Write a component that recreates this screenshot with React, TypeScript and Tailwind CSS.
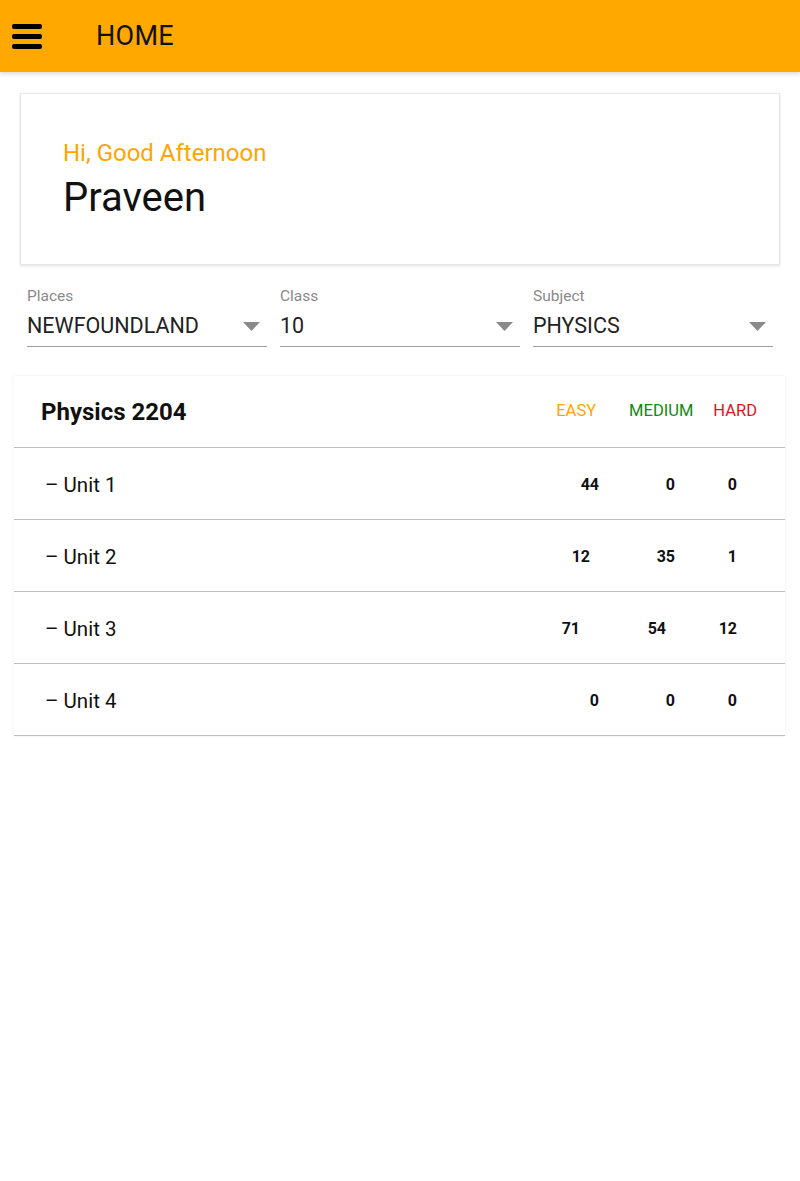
import React from "react";

const rows = [
  { name: "Unit 1", v: ["44", "0", "0"], w: ["w-[585px]", "w-[76px]", "w-[62px]"] },
  { name: "Unit 2", v: ["12", "35", "1"], w: ["w-[576px]", "w-[85px]", "w-[62px]"] },
  { name: "Unit 3", v: ["71", "54", "12"], w: ["w-[566px]", "w-[86px]", "w-[71px]"] },
  { name: "Unit 4", v: ["0", "0", "0"], w: ["w-[585px]", "w-[76px]", "w-[62px]"] },
];

function Select({ label, value }: { label: string; value: string }) {
  return (
    <div className="flex w-[240px] flex-col border-b border-[#9e9e9e]">
      <div className="text-[15.5px] leading-[20px] text-[#8a8a8a]">{label}</div>
      <div className="flex h-[40px] items-center justify-between pr-[7px]">
        <span className="text-[21.5px] text-[#222]">{value}</span>
        <svg width="17" height="9" viewBox="0 0 17 9">
          <path d="M0 0 L17 0 L8.5 9 Z" fill="#8a8a8a" />
        </svg>
      </div>
    </div>
  );
}

export default function App() {
  return (
    <div className="min-h-[1181px] w-[800px] bg-white font-['Roboto',sans-serif]">
      <header className="flex h-[72px] items-center bg-[#ffa800] shadow-[0_2px_4px_rgba(0,0,0,0.15)]">
        <div className="ml-[12px] flex w-[30px] flex-col gap-[5px]">
          <div className="h-[5px] rounded-[2px] bg-black" />
          <div className="h-[5px] rounded-[2px] bg-black" />
          <div className="h-[5px] rounded-[2px] bg-black" />
        </div>
        <div className="ml-[54px] text-[27px] tracking-[0.3px] text-[#111]">HOME</div>
      </header>

      <div className="mx-[20px] mt-[21px] flex h-[172px] flex-col justify-center border border-[#e6e6e6] pl-[42px] shadow-[0_1px_3px_rgba(0,0,0,0.12)]">
        <div className="text-[24px] leading-[28px] text-[#ffa500]">Hi, Good Afternoon</div>
        <div className="mt-[9px] text-[40px] leading-[44px] text-[#111]">Praveen</div>
      </div>

      <div className="mt-[21px] flex gap-[13px] pl-[27px]">
        <Select label="Places" value="NEWFOUNDLAND" />
        <Select label="Class" value="10" />
        <Select label="Subject" value="PHYSICS" />
      </div>

      <div className="mx-[14px] mt-[29px] w-[771px] shadow-[0_0_3px_rgba(0,0,0,0.08)]">
        <div className="flex h-[72px] items-center border-b border-[#bdbdbd] pl-[27px]">
          <div className="text-[24px] font-bold text-[#111]">Physics 2204</div>
          <div className="ml-auto flex items-center pr-[28px] text-[16.5px]">
            <span className="text-[#ffa500]">EASY</span>
            <span className="ml-[33px] text-[#118a11]">MEDIUM</span>
            <span className="ml-[20px] text-[#e0141e]">HARD</span>
          </div>
        </div>
        {rows.map((r) => (
          <div key={r.name} className="flex h-[72px] items-center border-b border-[#bdbdbd] pt-[3px] text-[16px] font-bold text-[#111]">
            <div className={`${r.w[0]} flex shrink-0 items-center justify-between pl-[31px]`}>
              <span className="text-[20.5px] font-normal">– {r.name}</span>
              <span>{r.v[0]}</span>
            </div>
            <div className={`${r.w[1]} flex shrink-0 justify-end`}>
              <span>{r.v[1]}</span>
            </div>
            <div className={`${r.w[2]} flex shrink-0 justify-end`}>
              <span>{r.v[2]}</span>
            </div>
          </div>
        ))}
      </div>
    </div>
  );
}
